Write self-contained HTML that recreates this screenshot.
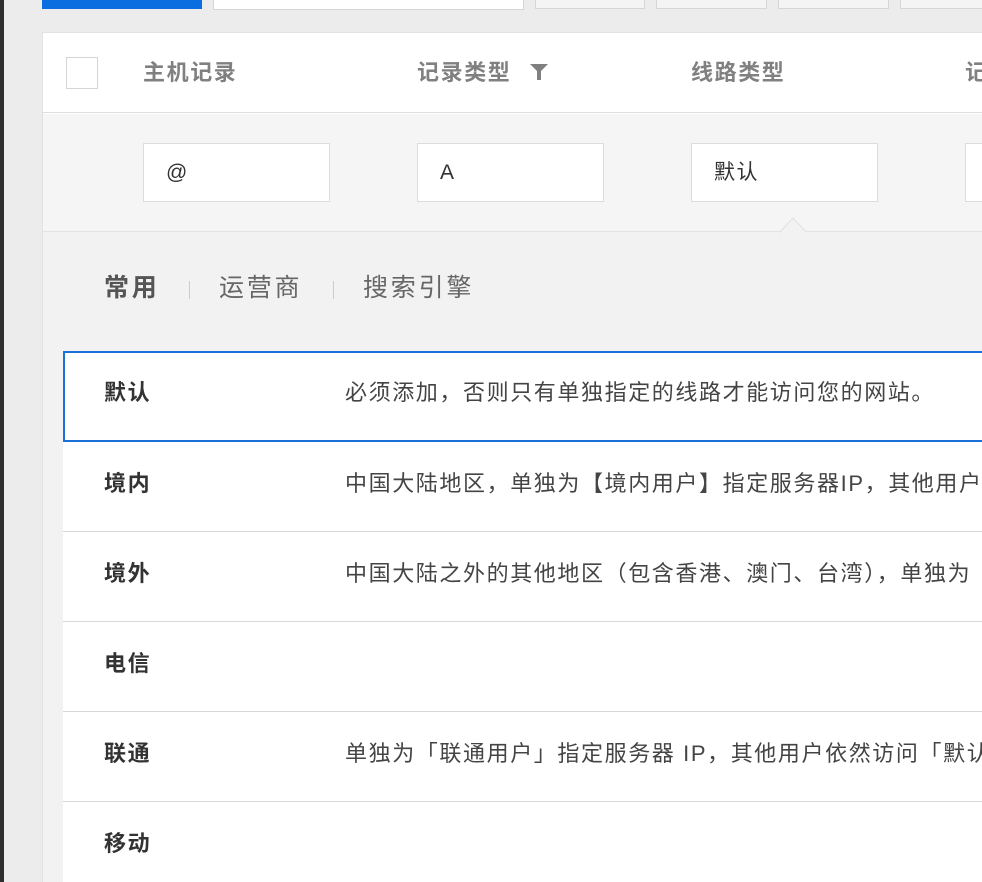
<!DOCTYPE html>
<html><head><meta charset="utf-8"><style>
*{margin:0;padding:0;box-sizing:border-box}
html,body{width:982px;height:882px;overflow:hidden}
body{background:#ececec;position:relative;font-family:"Liberation Sans","Noto Sans CJK SC",sans-serif}
.a{position:absolute}
.strip{left:0;top:0;width:4px;height:882px;background:#2e2e2e}
.btn{top:-2px;height:11px;background:#f4f4f4;border:1px solid #d6d6d6}
.card{left:42px;top:32px;width:940px;height:850px;background:#fff;border:1px solid #e2e2e2;border-right:none;border-bottom:none;overflow:hidden}
.hd{top:0;left:0;right:0;height:80px;border-bottom:1px solid #dedede}
.ht{top:26px;font-size:22px;letter-spacing:1.6px;font-weight:bold;color:#808080;line-height:28px;white-space:nowrap}
.fr{top:81px;left:0;right:0;height:118px;background:#f5f5f5;border-bottom:1px solid #e2e2e2}
.inp{top:29px;width:187px;height:59px;background:#fff;border:1px solid #dcdcdc;font-size:21px;color:#333;padding-left:22px;line-height:57px;letter-spacing:1.5px}
.panel{top:199px;left:0;right:0;bottom:0;background:#f2f2f2}
.tab{top:39px;font-size:25px;letter-spacing:2.8px;color:#666;line-height:34px;white-space:nowrap}
.sep{top:49px;width:1px;height:18px;background:#ccc}
.row{left:20px;width:960px;height:90px;background:#fff;border-bottom:1px solid #d8d8d8;font-size:22px;letter-spacing:1.6px;color:#444}
.row b{position:absolute;left:41px;top:28px;color:#333;line-height:28px}
.row span{position:absolute;left:282px;top:28px;line-height:28px;white-space:nowrap}
</style></head><body>
<div class="a strip"></div>
<div class="a" style="left:42px;top:0;width:160px;height:9px;background:#0a6ee0"></div>
<div class="a" style="left:213px;top:-2px;width:311px;height:12px;background:#fff;border:1px solid #d6d6d6"></div>
<div class="a btn" style="left:535px;width:110px"></div>
<div class="a btn" style="left:656px;width:111px"></div>
<div class="a btn" style="left:778px;width:111px"></div>
<div class="a btn" style="left:900px;width:90px"></div>
<div class="a card">
 <div class="a hd">
  <div class="a" style="left:23px;top:24px;width:32px;height:32px;border:1px solid #d6d6d6;background:#fff"></div>
  <div class="a ht" style="left:100px">主机记录</div>
  <div class="a ht" style="left:374px">记录类型</div>
  <svg class="a" style="left:486px;top:30px" width="20" height="18" viewBox="0 0 20 18"><path d="M1 1H19L12 8V17H8V8Z" fill="#808080"/></svg>
  <div class="a ht" style="left:648px">线路类型</div>
  <div class="a ht" style="left:922px">记录值</div>
 </div>
 <div class="a fr">
  <div class="a inp" style="left:100px">@</div>
  <div class="a inp" style="left:374px">A</div>
  <div class="a inp" style="left:648px">默认</div>
  <div class="a inp" style="left:922px"></div>
 </div>
 <svg class="a" style="left:736px;top:183px;z-index:2" width="28" height="18" viewBox="0 0 28 18"><path d="M0 17L14 2L28 17" fill="#f2f2f2" stroke="#e0e0e0" stroke-width="1"/><rect x="0" y="16.5" width="28" height="2" fill="#f2f2f2"/></svg>
 <div class="a panel">
  <div class="a tab" style="left:61px;font-weight:bold;color:#555">常用</div>
  <div class="a sep" style="left:146px"></div>
  <div class="a tab" style="left:176px">运营商</div>
  <div class="a sep" style="left:290px"></div>
  <div class="a tab" style="left:320px">搜索引擎</div>
  <div class="a row" style="top:119px;border:2px solid #1a6fd8;height:91px"><b style="left:39px;top:26px">默认</b><span style="left:280px;top:26px">必须添加，否则只有单独指定的线路才能访问您的网站。</span></div>
  <div class="a row" style="top:210px"><b>境内</b><span>中国大陆地区，单独为【境内用户】指定服务器IP，其他用户依然访问「默认」</span></div>
  <div class="a row" style="top:300px"><b>境外</b><span>中国大陆之外的其他地区（包含香港、澳门、台湾），单独为「境外用户」</span></div>
  <div class="a row" style="top:390px"><b>电信</b><span></span></div>
  <div class="a row" style="top:480px"><b>联通</b><span>单独为「联通用户」指定服务器 IP，其他用户依然访问「默认」</span></div>
  <div class="a row" style="top:570px"><b>移动</b><span></span></div>
 </div>
</div>
</body></html>
